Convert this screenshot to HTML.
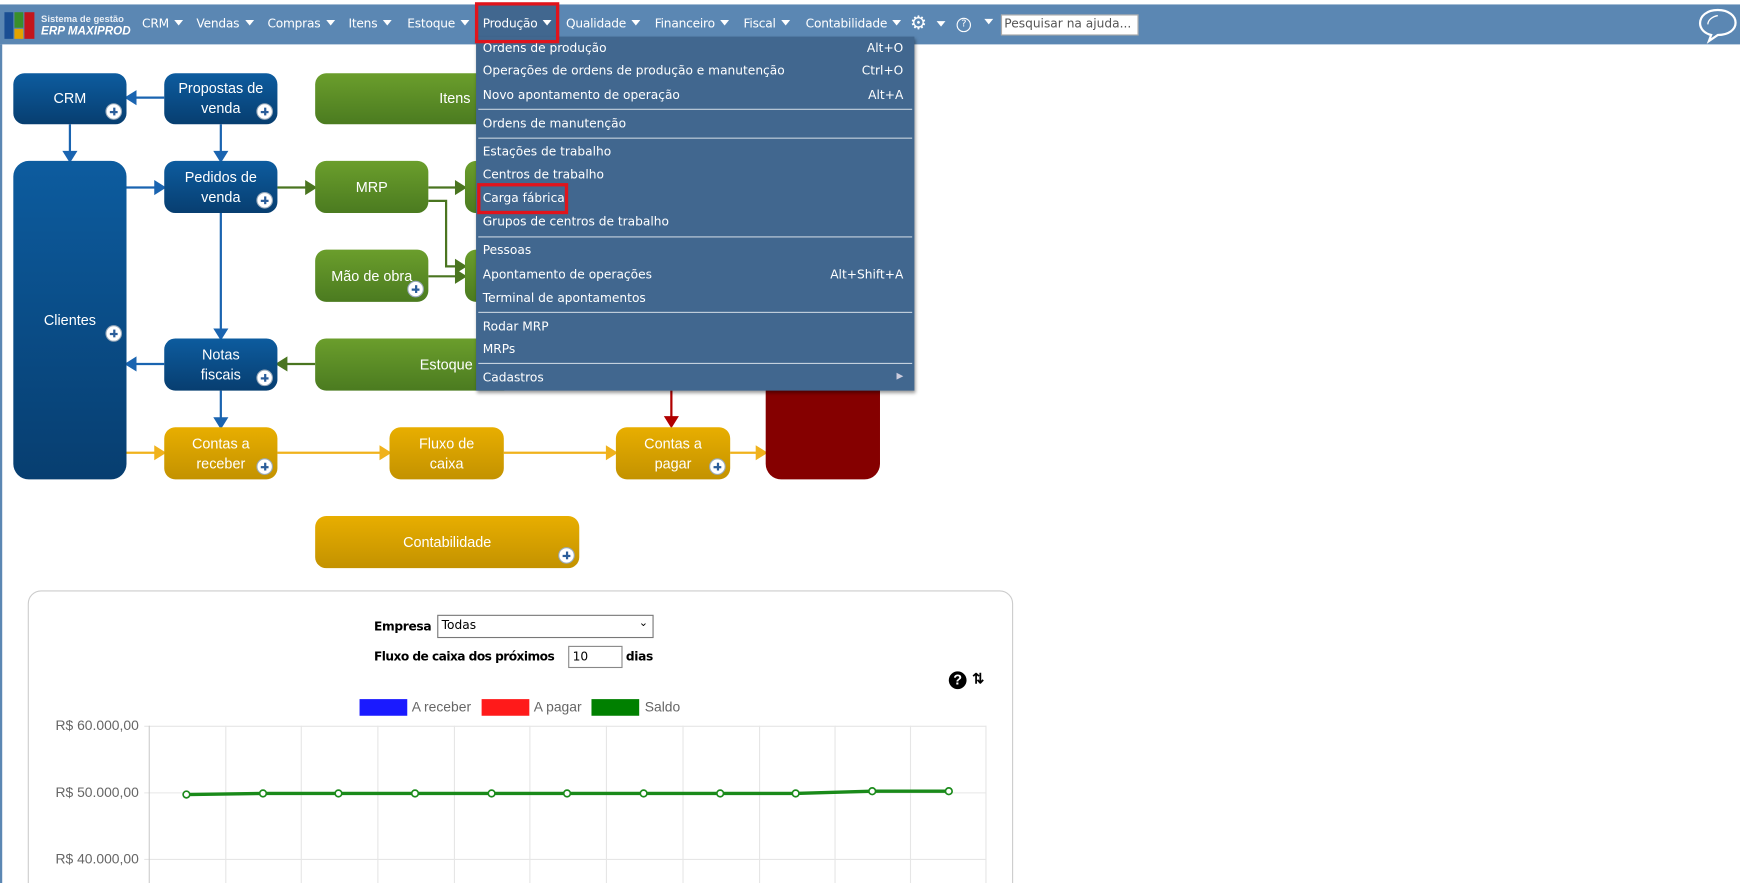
<!DOCTYPE html>
<html><head><meta charset="utf-8">
<style>
html,body{margin:0;padding:0;background:#fff;overflow:hidden;width:1740px;height:883px}
#o{position:relative;width:1740px;height:883px;overflow:hidden}
#w{position:absolute;left:0;top:0;width:1568px;height:796px;overflow:hidden;transform:scale(1.1097);transform-origin:0 0;font-family:"Liberation Sans",sans-serif}
.bar{position:absolute;left:0;top:4px;width:1568px;height:36px;background:#5b87b3}
.lb{position:absolute;left:0;top:40px;width:2px;height:760px;background:#5b87b3}
.nav{position:absolute;top:15px;color:#fff;font-family:"DejaVu Sans",sans-serif;font-size:11px;white-space:nowrap;letter-spacing:-0.2px}
.tri{display:inline-block;width:0;height:0;border-left:4px solid transparent;border-right:4px solid transparent;border-top:5px solid #fff;margin-left:5px;vertical-align:2px}
.b{position:absolute;border-radius:10px;color:#fff;font-size:13px;text-align:center;display:flex;align-items:center;justify-content:center;line-height:18px}
.bl{background:linear-gradient(#0d5c9f,#073e70)}
.gr{background:linear-gradient(#6b9e2c,#4b7b20)}
.ye{background:linear-gradient(#e8ae00,#c39200)}
.p{position:absolute;right:4px;bottom:4px;width:13px;height:13px;border-radius:50%;background:#fff;border:1px solid #9ab}
.p:before{content:"";position:absolute;left:3px;top:6px;width:7px;height:2px;background:#2a5d9a}
.p:after{content:"";position:absolute;left:6px;top:3px;width:2px;height:7px;background:#2a5d9a}
.menu{position:absolute;left:429px;top:33px;width:395px;height:319px;background:#41678f;box-shadow:1px 2px 3px rgba(0,0,0,.4);font-family:"DejaVu Sans",sans-serif;font-size:11px;color:#fff}
.mi{position:absolute;left:6px;right:10px;white-space:nowrap}
.mi span{float:right}
.sep{position:absolute;left:2px;right:2px;height:1px;background:#c7d3df}
.red{position:absolute;border:3px solid #e0141c}
.lbl{position:absolute;font-family:"DejaVu Sans",sans-serif;font-size:11px;font-weight:bold;white-space:nowrap;letter-spacing:-0.3px}
</style></head><body><div id="o"><div id="w">
<div class="bar"></div><div class="lb"></div>
<div style="position:absolute;left:4px;top:11px;width:8px;height:24px;background:#1a4e93"></div>
<div style="position:absolute;left:13px;top:11px;width:8px;height:14px;background:#3a8f2a"></div>
<div style="position:absolute;left:13px;top:26px;width:8px;height:9px;background:#e3a300"></div>
<div style="position:absolute;left:22px;top:11px;width:9px;height:24px;background:#c4161c"></div>
<div style="position:absolute;left:37px;top:12px;color:#e8eef5;font-size:8.5px;font-weight:bold">Sistema de gestão</div>
<div style="position:absolute;left:37px;top:22px;color:#fff;font-size:10.5px;font-weight:bold;font-style:italic">ERP MAXIPROD</div>
<div style="position:absolute;left:428px;top:4px;width:75px;height:34px;background:#41678f"></div>
<div class="nav" style="left:128px">CRM<i class="tri"></i></div>
<div class="nav" style="left:177px">Vendas<i class="tri"></i></div>
<div class="nav" style="left:241px">Compras<i class="tri"></i></div>
<div class="nav" style="left:314px">Itens<i class="tri"></i></div>
<div class="nav" style="left:367px">Estoque<i class="tri"></i></div>
<div class="nav" style="left:435px">Produção<i class="tri"></i></div>
<div class="nav" style="left:510px">Qualidade<i class="tri"></i></div>
<div class="nav" style="left:590px">Financeiro<i class="tri"></i></div>
<div class="nav" style="left:670px">Fiscal<i class="tri"></i></div>
<div class="nav" style="left:726px">Contabilidade<i class="tri"></i></div>
<div class="nav" style="left:820px;top:11px;font-size:17px">⚙<i class="tri" style="margin-left:9px"></i></div>
<div class="nav" style="left:862px;top:14px"><span style="display:inline-block;width:11px;height:11px;border:1.5px solid #fff;border-radius:50%;font-size:9px;text-align:center;line-height:11px">?</span><i class="tri" style="margin-left:12px"></i></div>
<div style="position:absolute;left:902px;top:13px;width:124px;height:19px;background:#fff;border:1px solid #aaa;box-sizing:border-box;font-family:'DejaVu Sans',sans-serif;font-size:11px;color:#555;padding:1px 2px;white-space:nowrap;overflow:hidden">Pesquisar na ajuda...</div>
<svg style="position:absolute;left:1528px;top:6px" width="40" height="34" viewBox="0 0 40 34"><path d="M20 3C10 3 4 8.5 4 15c0 5 4 9 10 10.5L12 31l8-5.5c10 0 16-5 16-11S30 3 20 3z" fill="none" stroke="#fff" stroke-width="2"/><path d="M11 16c0-4 4-7 9-8" fill="none" stroke="#fff" stroke-width="1.2"/></svg>

<svg style="position:absolute;left:0;top:0" width="900" height="520">
<g stroke="#1a64b0" stroke-width="2" fill="#1a64b0">
<line x1="148" y1="88" x2="120" y2="88"/><path d="M114 88l8-5v10z"/>
<line x1="63" y1="112" x2="63" y2="138"/><path d="M63 145l-5-8h10z"/>
<line x1="199" y1="112" x2="199" y2="138"/><path d="M199 145l-5-8h10z"/>
<line x1="114" y1="169" x2="142" y2="169"/><path d="M148 169l-8-5v10z"/>
<line x1="199" y1="192" x2="199" y2="298"/><path d="M199 305l-5-8h10z"/>
<line x1="148" y1="328" x2="120" y2="328"/><path d="M114 328l8-5v10z"/>
<line x1="199" y1="352" x2="199" y2="378"/><path d="M199 385l-5-8h10z"/>
</g>
<g stroke="#4a7520" stroke-width="2" fill="#4a7520">
<line x1="250" y1="169" x2="278" y2="169"/><path d="M284 169l-8-5v10z"/>
<line x1="386" y1="169" x2="413" y2="169"/><path d="M419 169l-8-5v10z"/>
<polyline points="386,181 402,181 402,240 413,240" fill="none"/><path d="M419 240l-8-5v10z"/>
<line x1="386" y1="249" x2="413" y2="249"/><path d="M419 249l-8-5v10z"/>
<line x1="284" y1="328" x2="256" y2="328"/><path d="M250 328l8-5v10z"/>
</g>
<g stroke="#f0b21c" stroke-width="2" fill="#f0b21c">
<line x1="114" y1="408" x2="142" y2="408"/><path d="M148 408l-8-5v10z"/>
<line x1="250" y1="408" x2="345" y2="408"/><path d="M351 408l-8-5v10z"/>
<line x1="454" y1="408" x2="549" y2="408"/><path d="M555 408l-8-5v10z"/>
<line x1="658" y1="408" x2="684" y2="408"/><path d="M690 408l-8-5v10z"/>
</g>
<g stroke="#b00000" stroke-width="2" fill="#b00000"><line x1="605" y1="352" x2="605" y2="377"/><path d="M605 384l-5-8h10z"/></g>
</svg>

<div class="b bl" style="left:12px;top:66px;width:102px;height:46px">CRM<i class="p"></i></div>
<div class="b bl" style="left:148px;top:66px;width:102px;height:46px">Propostas de<br>venda<i class="p"></i></div>
<div class="b gr" style="left:284px;top:66px;width:200px;height:46px;justify-content:flex-end;padding-right:60px;box-sizing:border-box">Itens</div>
<div class="b bl" style="left:12px;top:145px;width:102px;height:287px;border-radius:14px">Clientes<i class="p" style="bottom:auto;top:148px"></i></div>
<div class="b bl" style="left:148px;top:145px;width:102px;height:47px">Pedidos de<br>venda<i class="p"></i></div>
<div class="b gr" style="left:284px;top:145px;width:102px;height:47px">MRP</div>
<div class="b gr" style="left:419px;top:145px;width:40px;height:47px"></div>
<div class="b gr" style="left:284px;top:225px;width:102px;height:47px">Mão de obra<i class="p"></i></div>
<div class="b gr" style="left:419px;top:225px;width:40px;height:47px"></div>
<div class="b bl" style="left:148px;top:305px;width:102px;height:47px">Notas<br>fiscais<i class="p"></i></div>
<div class="b gr" style="left:284px;top:305px;width:180px;height:47px;justify-content:flex-end;padding-right:38px;box-sizing:border-box">Estoque</div>
<div class="b ye" style="left:148px;top:385px;width:102px;height:47px">Contas a<br>receber<i class="p"></i></div>
<div class="b ye" style="left:351px;top:385px;width:103px;height:47px">Fluxo de<br>caixa</div>
<div class="b ye" style="left:555px;top:385px;width:103px;height:47px">Contas a<br>pagar<i class="p"></i></div>
<div class="b" style="left:690px;top:320px;width:103px;height:112px;background:#850000;border-radius:14px"></div>
<div class="b ye" style="left:284px;top:465px;width:238px;height:47px">Contabilidade<i class="p"></i></div>

<div class="menu">
<div class="mi" style="top:4px">Ordens de produção<span>Alt+O</span></div>
<div class="mi" style="top:24px">Operações de ordens de produção e manutenção<span>Ctrl+O</span></div>
<div class="mi" style="top:46px">Novo apontamento de operação<span>Alt+A</span></div>
<div class="sep" style="top:65px"></div>
<div class="mi" style="top:72px">Ordens de manutenção</div>
<div class="sep" style="top:91px"></div>
<div class="mi" style="top:97px">Estações de trabalho</div>
<div class="mi" style="top:118px">Centros de trabalho</div>
<div class="mi" style="top:139px">Carga fábrica</div>
<div class="mi" style="top:160px">Grupos de centros de trabalho</div>
<div class="sep" style="top:180px"></div>
<div class="mi" style="top:186px">Pessoas</div>
<div class="mi" style="top:208px">Apontamento de operações<span>Alt+Shift+A</span></div>
<div class="mi" style="top:229px">Terminal de apontamentos</div>
<div class="sep" style="top:248px"></div>
<div class="mi" style="top:255px">Rodar MRP</div>
<div class="mi" style="top:275px">MRPs</div>
<div class="sep" style="top:294px"></div>
<div class="mi" style="top:301px">Cadastros<span style="font-size:8px;color:#ccd">▶</span></div>
</div>
<div class="red" style="left:428px;top:2px;width:70px;height:31px"></div>
<div class="red" style="left:430px;top:165px;width:76px;height:22px"></div>

<div style="position:absolute;left:25px;top:532px;width:886px;height:400px;border:1px solid #ccc;border-radius:12px"></div>
<div class="lbl" style="left:337px;top:558px">Empresa</div>
<div style="position:absolute;left:394px;top:554px;width:195px;height:21px;border:1px solid #777;box-sizing:border-box;font-family:'DejaVu Sans',sans-serif;font-size:11px;padding:2px 3px">Todas<span style="position:absolute;right:4px;top:1px;font-size:10px">⌄</span></div>
<div class="lbl" style="left:337px;top:585px;letter-spacing:-0.5px">Fluxo de caixa dos próximos</div>
<div style="position:absolute;left:512px;top:582px;width:49px;height:20px;border:1px solid #888;box-sizing:border-box;font-family:'DejaVu Sans',sans-serif;font-size:11px;padding:2px 3px">10</div>
<div class="lbl" style="left:564px;top:585px">dias</div>
<div style="position:absolute;left:855px;top:605px;width:16px;height:16px;border-radius:50%;background:#000;color:#fff;font-size:13px;font-weight:bold;text-align:center;line-height:16px">?</div>
<div style="position:absolute;left:876px;top:604px;font-size:13px;font-weight:bold">⇅</div>
<div style="position:absolute;left:324px;top:630px;width:43px;height:15px;background:#1a1aff"></div>
<div style="position:absolute;left:371px;top:630px;font-size:12.5px;color:#666">A receber</div>
<div style="position:absolute;left:434px;top:630px;width:43px;height:15px;background:#ff1a1a"></div>
<div style="position:absolute;left:481px;top:630px;font-size:12.5px;color:#666">A pagar</div>
<div style="position:absolute;left:533px;top:630px;width:43px;height:15px;background:#008000"></div>
<div style="position:absolute;left:581px;top:630px;font-size:12.5px;color:#666">Saldo</div>
<div style="position:absolute;left:50px;top:647px;font-size:12.5px;color:#666">R$ 60.000,00</div>
<div style="position:absolute;left:50px;top:707px;font-size:12.5px;color:#666">R$ 50.000,00</div>
<div style="position:absolute;left:50px;top:767px;font-size:12.5px;color:#666">R$ 40.000,00</div>
<svg style="position:absolute;left:0;top:0" width="920" height="796">
<g stroke="#e6e6e6" stroke-width="1">
<line x1="130" y1="654.5" x2="889" y2="654.5"/><line x1="130" y1="714.5" x2="889" y2="714.5"/><line x1="130" y1="774.5" x2="889" y2="774.5"/>
<line x1="203.5" y1="654" x2="203.5" y2="796"/><line x1="271.5" y1="654" x2="271.5" y2="796"/><line x1="340.5" y1="654" x2="340.5" y2="796"/><line x1="409.5" y1="654" x2="409.5" y2="796"/><line x1="477.5" y1="654" x2="477.5" y2="796"/><line x1="546.5" y1="654" x2="546.5" y2="796"/><line x1="615.5" y1="654" x2="615.5" y2="796"/><line x1="684.5" y1="654" x2="684.5" y2="796"/><line x1="752.5" y1="654" x2="752.5" y2="796"/><line x1="820.5" y1="654" x2="820.5" y2="796"/><line x1="888.5" y1="654" x2="888.5" y2="796"/>
</g>
<line x1="134.5" y1="654" x2="134.5" y2="796" stroke="#ccc"/>
<polyline points="168,716 237,715 305,715 374,715 443,715 511,715 580,715 649,715 717,715 786,713 855,713" fill="none" stroke="#1a8a1a" stroke-width="3"/>
<g fill="#fff" stroke="#1a8a1a" stroke-width="1.5">
<circle cx="168" cy="716" r="3"/><circle cx="237" cy="715" r="3"/><circle cx="305" cy="715" r="3"/><circle cx="374" cy="715" r="3"/><circle cx="443" cy="715" r="3"/><circle cx="511" cy="715" r="3"/><circle cx="580" cy="715" r="3"/><circle cx="649" cy="715" r="3"/><circle cx="717" cy="715" r="3"/><circle cx="786" cy="713" r="3"/><circle cx="855" cy="713" r="3"/>
</g>
</svg>
</div></div></body></html>
